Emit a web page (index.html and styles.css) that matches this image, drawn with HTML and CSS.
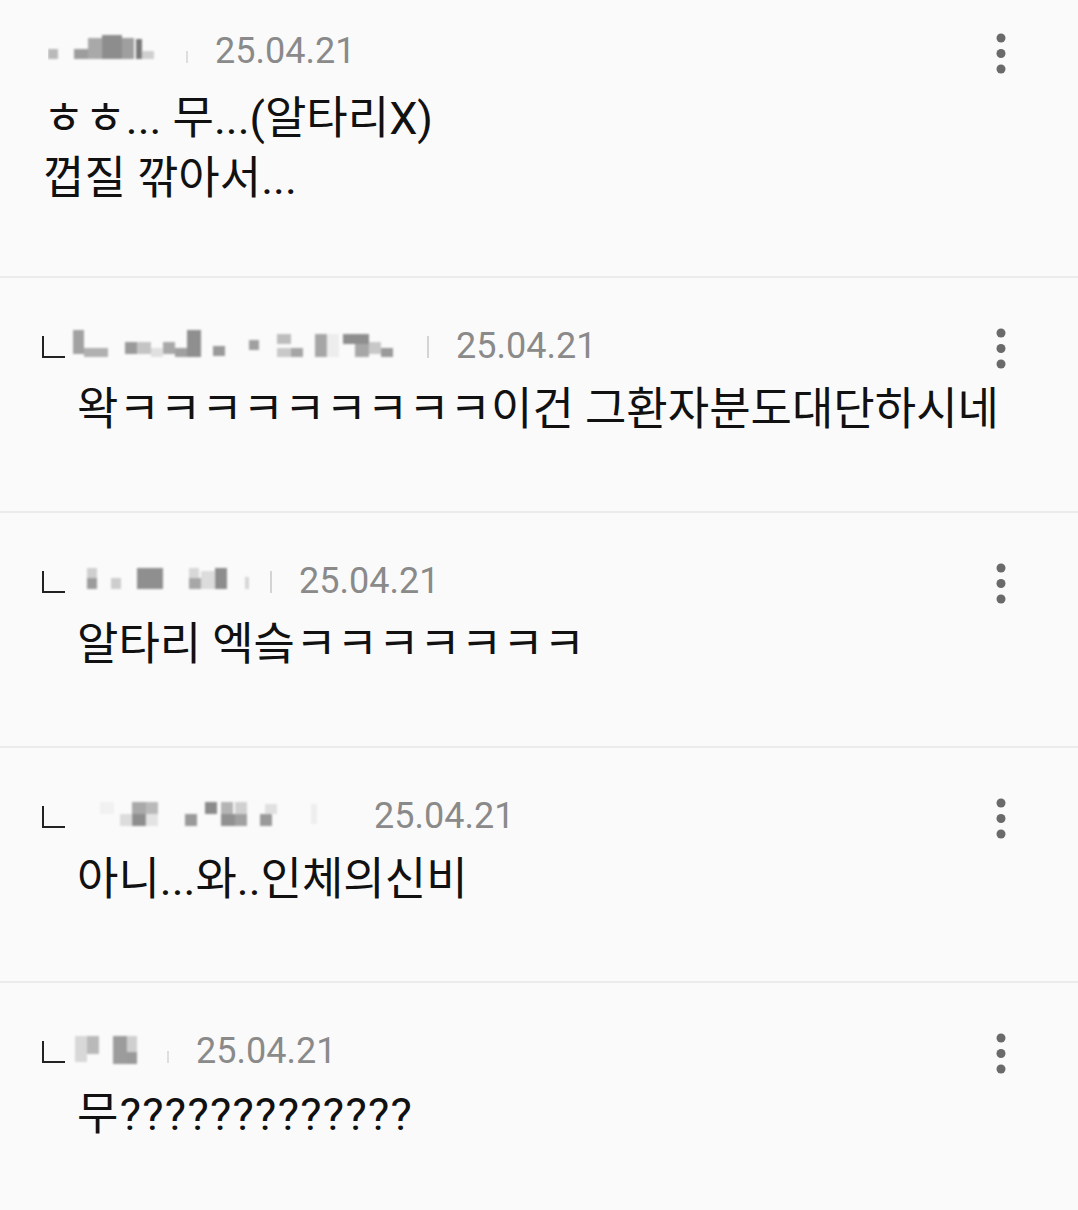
FILE: index.html
```html
<!DOCTYPE html>
<html lang="ko">
<head>
    <meta charset="UTF-8">
    <meta name="viewport" content="width=device-width, initial-scale=1.0">
    <title>댓글</title>
    <link rel="stylesheet" href="styles.css">
</head>
<body>
    <svg width="0" height="0" class="defs">
        <defs>
            <filter id="soft"><feGaussianBlur stdDeviation="1.2"/></filter>
        </defs>
    </svg>

    <div class="comment first">
        <div class="main">
            <div class="meta">
                <svg class="nick" width="118" height="48" viewBox="0 0 118 48">
                    <g filter="url(#soft)">
                        <rect x="0" y="22" width="10" height="10" fill="#b9b9b9"/>
                        <rect x="26" y="22" width="14" height="10" fill="#9d9d9d"/>
                        <rect x="40" y="11" width="14" height="21" fill="#a9a9a9"/>
                        <rect x="54" y="8" width="20" height="24" fill="#8d8d8d"/>
                        <rect x="74" y="11" width="12" height="21" fill="#9f9f9f"/>
                        <rect x="88" y="12" width="6" height="20" fill="#7a7a7a"/>
                        <rect x="94" y="24" width="12" height="8" fill="#cfcfcf"/>
                    </g>
                </svg>
                <span class="sep faint"></span>
                <span class="date">25.04.21</span>
            </div>
            <p class="text">ㅎㅎ... 무...(알타리X)<br>껍질 깎아서...</p>
        </div>
        <button class="more" aria-label="더보기">
            <svg width="18" height="48" viewBox="0 0 18 48"><circle cx="9" cy="10" r="4.5"/><circle cx="9" cy="25.5" r="4.5"/><circle cx="9" cy="41" r="4.5"/></svg>
        </button>
    </div>

    <div class="comment reply">
        <div class="main">
            <div class="meta">
                <svg class="mark" width="23" height="22" viewBox="0 0 23 22"><path d="M1 0 V21 H23" fill="none" stroke="#222" stroke-width="2"/></svg>
                <svg class="nick" width="342" height="48" viewBox="0 0 342 48">
                    <g filter="url(#soft)">
                        <rect x="8" y="8" width="11" height="24" fill="#a2a2a2"/>
                        <rect x="19" y="26" width="24" height="9" fill="#b0b0b0"/>
                        <rect x="60" y="20" width="12" height="12" fill="#9a9a9a"/>
                        <rect x="72" y="20" width="14" height="12" fill="#c4c4c4"/>
                        <rect x="86" y="26" width="12" height="9" fill="#e0e0e0"/>
                        <rect x="98" y="20" width="12" height="12" fill="#a8a8a8"/>
                        <rect x="110" y="26" width="12" height="9" fill="#a0a0a0"/>
                        <rect x="122" y="8" width="14" height="27" fill="#8f8f8f"/>
                        <rect x="148" y="24" width="12" height="10" fill="#9a9a9a"/>
                        <rect x="184" y="18" width="10" height="10" fill="#a0a0a0"/>
                        <rect x="212" y="12" width="14" height="10" fill="#bdbdbd"/>
                        <rect x="212" y="26" width="14" height="9" fill="#c9c9c9"/>
                        <rect x="226" y="26" width="12" height="9" fill="#a5a5a5"/>
                        <rect x="250" y="12" width="12" height="23" fill="#a6a6a6"/>
                        <rect x="262" y="12" width="12" height="23" fill="#ededed"/>
                        <rect x="278" y="12" width="26" height="10" fill="#8e8e8e"/>
                        <rect x="290" y="22" width="14" height="13" fill="#a7a7a7"/>
                        <rect x="304" y="20" width="12" height="12" fill="#c8c8c8"/>
                        <rect x="316" y="26" width="12" height="9" fill="#9a9a9a"/>
                    </g>
                </svg>
                <span class="sep"></span>
                <span class="date">25.04.21</span>
            </div>
            <p class="text">왁ㅋㅋㅋㅋㅋㅋㅋㅋㅋ이건 그환자분도대단하시네</p>
        </div>
        <button class="more" aria-label="더보기">
            <svg width="18" height="48" viewBox="0 0 18 48"><circle cx="9" cy="10" r="4.5"/><circle cx="9" cy="25.5" r="4.5"/><circle cx="9" cy="41" r="4.5"/></svg>
        </button>
    </div>

    <div class="comment reply">
        <div class="main">
            <div class="meta">
                <svg class="mark" width="23" height="22" viewBox="0 0 23 22"><path d="M1 0 V21 H23" fill="none" stroke="#222" stroke-width="2"/></svg>
                <svg class="nick" width="185" height="48" viewBox="0 0 185 48">
                    <g filter="url(#soft)">
                        <rect x="22" y="11" width="10" height="10" fill="#cfcfcf"/>
                        <rect x="22" y="21" width="10" height="11" fill="#9c9c9c"/>
                        <rect x="46" y="21" width="10" height="11" fill="#cdcdcd"/>
                        <rect x="72" y="11" width="26" height="21" fill="#8f8f8f"/>
                        <rect x="124" y="11" width="10" height="10" fill="#d8d8d8"/>
                        <rect x="124" y="21" width="12" height="11" fill="#a7a7a7"/>
                        <rect x="136" y="14" width="14" height="18" fill="#dcdcdc"/>
                        <rect x="150" y="11" width="12" height="21" fill="#8d8d8d"/>
                        <rect x="180" y="20" width="4" height="12" fill="#d6d6d6"/>
                    </g>
                </svg>
                <span class="sep"></span>
                <span class="date">25.04.21</span>
            </div>
            <p class="text">알타리 엑슼ㅋㅋㅋㅋㅋㅋㅋ</p>
        </div>
        <button class="more" aria-label="더보기">
            <svg width="18" height="48" viewBox="0 0 18 48"><circle cx="9" cy="10" r="4.5"/><circle cx="9" cy="25.5" r="4.5"/><circle cx="9" cy="41" r="4.5"/></svg>
        </button>
    </div>

    <div class="comment reply">
        <div class="main">
            <div class="meta">
                <svg class="mark" width="23" height="22" viewBox="0 0 23 22"><path d="M1 0 V21 H23" fill="none" stroke="#222" stroke-width="2"/></svg>
                <svg class="nick" width="270" height="48" viewBox="0 0 270 48">
                    <g filter="url(#soft)">
                        <rect x="35" y="10" width="14" height="12" fill="#f1f1f1"/>
                        <rect x="55" y="22" width="12" height="12" fill="#dcdcdc"/>
                        <rect x="67" y="10" width="14" height="12" fill="#a9a9a9"/>
                        <rect x="67" y="22" width="14" height="12" fill="#8e8e8e"/>
                        <rect x="81" y="10" width="12" height="12" fill="#b9b9b9"/>
                        <rect x="81" y="22" width="12" height="12" fill="#e3e3e3"/>
                        <rect x="120" y="22" width="12" height="12" fill="#9a9a9a"/>
                        <rect x="140" y="10" width="12" height="12" fill="#8b8b8b"/>
                        <rect x="156" y="10" width="12" height="12" fill="#b4b4b4"/>
                        <rect x="156" y="22" width="14" height="12" fill="#919191"/>
                        <rect x="170" y="10" width="12" height="12" fill="#d0d0d0"/>
                        <rect x="170" y="22" width="12" height="12" fill="#a1a1a1"/>
                        <rect x="195" y="22" width="12" height="12" fill="#9a9a9a"/>
                        <rect x="200" y="12" width="12" height="10" fill="#e0e0e0"/>
                        <rect x="246" y="12" width="6" height="20" fill="#eeeeee"/>
                    </g>
                </svg>
                <span class="sep none"></span>
                <span class="date">25.04.21</span>
            </div>
            <p class="text">아니...와..인체의신비</p>
        </div>
        <button class="more" aria-label="더보기">
            <svg width="18" height="48" viewBox="0 0 18 48"><circle cx="9" cy="10" r="4.5"/><circle cx="9" cy="25.5" r="4.5"/><circle cx="9" cy="41" r="4.5"/></svg>
        </button>
    </div>

    <div class="comment reply">
        <div class="main">
            <div class="meta">
                <svg class="mark" width="23" height="22" viewBox="0 0 23 22"><path d="M1 0 V21 H23" fill="none" stroke="#222" stroke-width="2"/></svg>
                <svg class="nick" width="82" height="48" viewBox="0 0 82 48">
                    <g filter="url(#soft)">
                        <rect x="10" y="9" width="12" height="26" fill="#d8d8d8"/>
                        <rect x="22" y="9" width="12" height="18" fill="#b9b9b9"/>
                        <rect x="48" y="9" width="14" height="28" fill="#9c9c9c"/>
                        <rect x="62" y="9" width="10" height="16" fill="#cfcfcf"/>
                        <rect x="62" y="25" width="10" height="12" fill="#9a9a9a"/>
                    </g>
                </svg>
                <span class="sep faint"></span>
                <span class="date">25.04.21</span>
            </div>
            <p class="text wide">무?????????????</p>
        </div>
        <button class="more" aria-label="더보기">
            <svg width="18" height="48" viewBox="0 0 18 48"><circle cx="9" cy="10" r="4.5"/><circle cx="9" cy="25.5" r="4.5"/><circle cx="9" cy="41" r="4.5"/></svg>
        </button>
    </div>
</body>
</html>
```

FILE: styles.css
```css
body {
    margin: 0;
    background-color: #fafafa;
    font-family: Roboto, "Noto Sans CJK KR", sans-serif;
    color: #111;
    overflow: hidden;
}
.defs {
    position: absolute;
}
.comment {
    display: flex;
    align-items: flex-start;
    padding: 44px 68px 72px 42px;
    border-bottom: 2px solid #ebebeb;
}
.comment.first {
    padding-top: 27px;
    padding-bottom: 67px;
}
.main {
    flex: 1;
    min-width: 0;
}
.meta {
    display: flex;
    align-items: center;
    height: 48px;
}
.first .meta {
    padding-left: 6px;
}
.mark {
    flex: none;
    margin-top: 2px;
}
.nick {
    flex: none;
    display: block;
}
.sep {
    width: 2px;
    height: 22px;
    margin: 2px 27px 0 20px;
    background-color: #d4d4d4;
}
.sep.faint {
    height: 12px;
    margin-top: 12px;
    background-color: #dedede;
}
.sep.none {
    background-color: transparent;
    margin-left: 10px;
}
.date {
    font-size: 36px;
    color: #8a8a8a;
}
.text {
    margin: 11px 0 0;
    padding-left: 35px;
    font-size: 45px;
    line-height: 58px;
    white-space: nowrap;
}
.text.wide {
    letter-spacing: 1.3px;
}
.first .text {
    margin-top: 14px;
    padding-left: 1px;
    line-height: 60px;
}
.more {
    flex: none;
    padding: 0;
    margin-top: 1px;
    border: none;
    background: none;
    cursor: pointer;
}
.more svg {
    display: block;
    fill: #6a6a6a;
}
```
